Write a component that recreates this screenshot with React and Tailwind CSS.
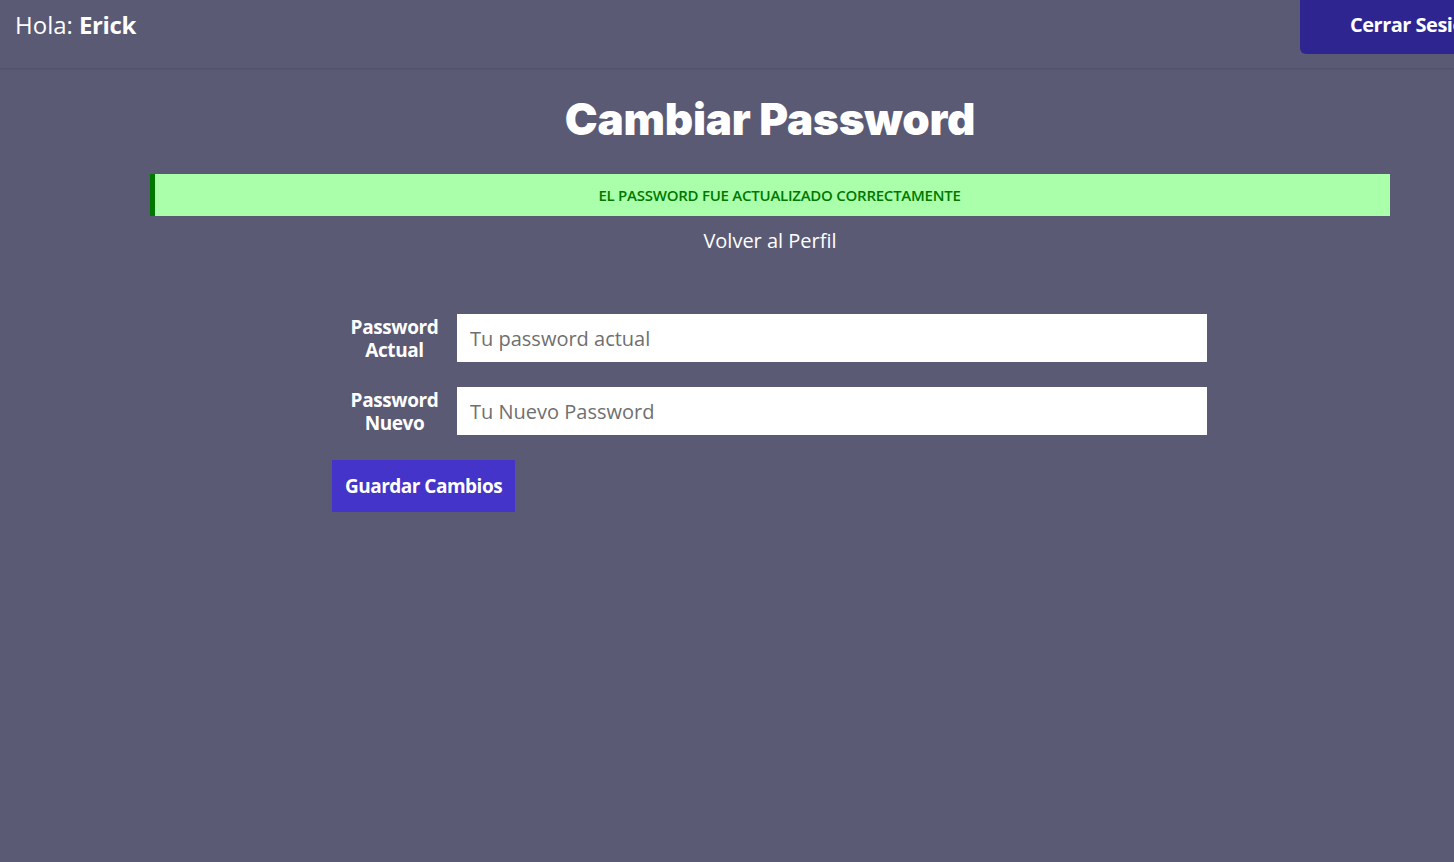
export default function App() {
  const font = { fontFamily: '"Open Sans", "Liberation Sans", sans-serif' };
  return (
    <div className="min-h-[862px] w-full overflow-hidden bg-[#5a5a75] text-white" style={font}>
      <header className="flex h-[68px] items-start justify-between shadow-[0_1px_2px_rgba(0,0,0,0.12)]">
        <p className="whitespace-nowrap pl-[15px] pt-[9px] text-[24px] leading-[32px]">
          Hola: <span className="font-bold tracking-[-0.4px]">Erick</span>
        </p>
        <button className="flex h-[54px] w-[154px] shrink-0 items-center overflow-hidden whitespace-nowrap rounded-bl-md bg-[#2e2590] pb-[4px] pl-[50px] text-[20px] font-bold tracking-[-0.5px] text-white">
          Cerrar Sesión
        </button>
      </header>
      <main className="pl-[86px]">
        <h1
          className="mt-[25px] text-center text-[44px] font-black leading-[52px] tracking-[-0.2px]"
          style={{ fontFamily: 'Inter, "Liberation Sans", sans-serif' }}
        >
          Cambiar Password
        </h1>
        <div className="mx-[64px] mt-[29px] flex h-[42px] items-center justify-center border-l-[5px] border-[#007800] bg-[#aaffaa] pl-[14px] text-[15px] font-semibold uppercase tracking-[-0.25px] text-[#007800]">
          El Password fue actualizado correctamente
        </div>
        <p className="mt-[11px] text-center text-[20px] leading-[28px]">Volver al Perfil</p>
        <form className="ml-[246px] mt-[59px] flex w-[875px] flex-col gap-[25px]">
          <div className="flex items-center">
            <label className="w-[125px] pt-[2px] text-center text-[19px] font-bold leading-[23px] tracking-[-0.4px]">
              Password<br />Actual
            </label>
            <input
              type="password"
              placeholder="Tu password actual"
              className="h-[48px] w-[750px] bg-white px-[13px] text-[20px] text-gray-800 outline-none placeholder:text-[#6f6f6f]"
            />
          </div>
          <div className="flex items-center">
            <label className="w-[125px] pt-[2px] text-center text-[19px] font-bold leading-[23px] tracking-[-0.4px]">
              Password<br />Nuevo
            </label>
            <input
              type="password"
              placeholder="Tu Nuevo Password"
              className="h-[48px] w-[750px] bg-white px-[13px] text-[20px] text-gray-800 outline-none placeholder:text-[#6f6f6f]"
            />
          </div>
          <div>
            <button
              type="button"
              className="h-[52px] w-[183px] bg-[#4434c9] text-[19px] font-bold tracking-[-0.5px] text-white"
            >
              Guardar Cambios
            </button>
          </div>
        </form>
      </main>
    </div>
  );
}
